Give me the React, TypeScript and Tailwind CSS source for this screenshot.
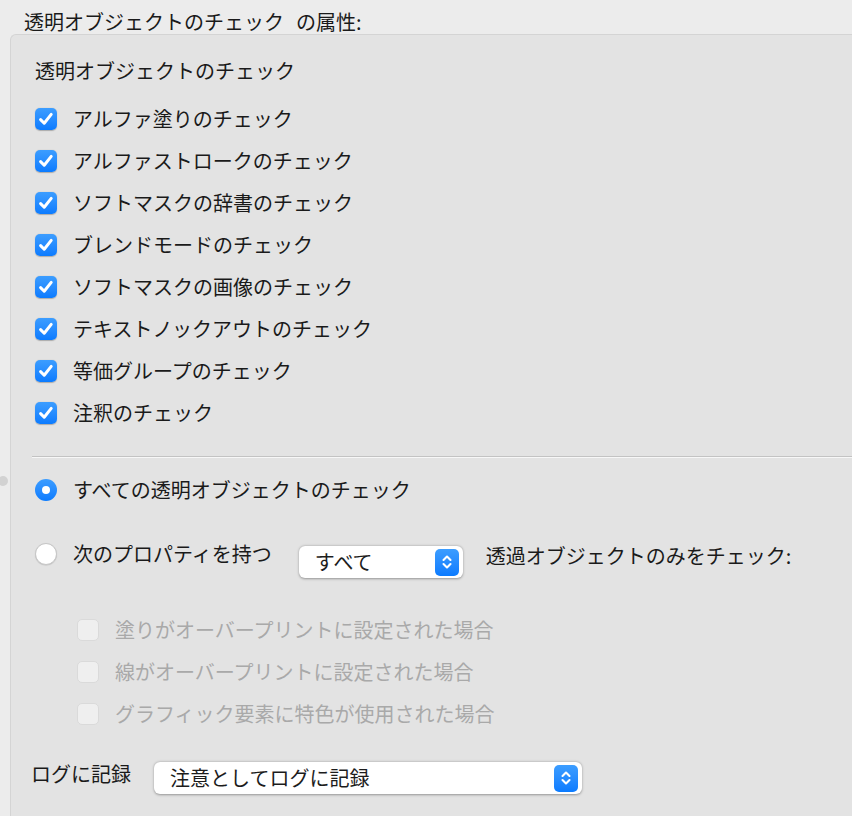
import React from 'react';

const checks = [
  'アルファ塗りのチェック',
  'アルファストロークのチェック',
  'ソフトマスクの辞書のチェック',
  'ブレンドモードのチェック',
  'ソフトマスクの画像のチェック',
  'テキストノックアウトのチェック',
  '等価グループのチェック',
  '注釈のチェック',
];

const disabledChecks = [
  '塗りがオーバープリントに設定された場合',
  '線がオーバープリントに設定された場合',
  'グラフィック要素に特色が使用された場合',
];

const CheckBox = ({ checked }: { checked: boolean }) =>
  checked ? (
    <span className="w-[22px] h-[22px] rounded-[5px] bg-gradient-to-b from-[#3c9dff] to-[#0a7bff] flex items-center justify-center shrink-0 shadow-[0_0.5px_1px_rgba(0,0,0,0.25)]">
      <svg width="18" height="18" viewBox="0 0 18 18" fill="none">
        <path d="M3.6 9.6 L7.2 13.2 L14.2 4.4" stroke="white" strokeWidth="3" strokeLinecap="round" strokeLinejoin="round" />
      </svg>
    </span>
  ) : (
    <span className="w-[22px] h-[22px] rounded-[5px] bg-[#efefef] border border-[#dadada] shrink-0" />
  );

const Stepper = () => (
  <span className="w-[24px] h-[27px] rounded-[5px] bg-gradient-to-b from-[#3c9dff] to-[#0a7bff] flex items-center justify-center shrink-0">
    <svg width="12" height="18" viewBox="0 0 12 18" fill="none">
      <path d="M2.5 7 L6 3.5 L9.5 7" stroke="white" strokeWidth="2.1" strokeLinecap="round" strokeLinejoin="round" />
      <path d="M2.5 11 L6 14.5 L9.5 11" stroke="white" strokeWidth="2.1" strokeLinecap="round" strokeLinejoin="round" />
    </svg>
  </span>
);

const Select = ({ label, width }: { label: string; width: string }) => (
  <div className={`${width} h-[32px] bg-white rounded-[6px] shadow-[0_0.5px_2.5px_rgba(0,0,0,0.35)] flex items-center justify-between pl-[16px] pr-[4px] shrink-0`}>
    <span className="leading-[28px] text-[#1c1c1c]">{label}</span>
    <Stepper />
  </div>
);

export default function App() {
  return (
    <div
      className="relative w-[852px] h-[816px] bg-[#ececec] overflow-hidden flex flex-col text-[20px] text-[#1a1a1a]"
      style={{ fontFamily: '"Noto Sans CJK JP", "Noto Sans", sans-serif' }}
    >
      {/* splitter handle */}
      <span className="absolute left-[-2px] top-[476px] w-[10px] h-[10px] rounded-full bg-[#d2d2d2]" />

      <div className="h-[34px] shrink-0 pl-[24px] pt-[8px]">
        <span className="leading-[28px] flex">
          <span>透明オブジェクトのチェック</span>
          <span className="ml-[12px]">の属性:</span>
        </span>
      </div>

      <div className="flex-1 ml-[10px] mr-[-10px] border-t border-l border-[#d4d4d4] rounded-tl-[6px] bg-[#e3e3e3] pl-[24px] flex flex-col">
        <div className="mt-[22px] leading-[28px]">透明オブジェクトのチェック</div>

        <div className="mt-[13px] flex flex-col">
          {checks.map((c) => (
            <div key={c} className="h-[42px] flex items-center gap-[16px]">
              <CheckBox checked />
              <span className="leading-[28px]">{c}</span>
            </div>
          ))}
        </div>

        <div className="mt-[22px] ml-[-3px] border-t border-[#c3c3c3] border-b border-b-[#f7f7f7]" />

        <div className="mt-[11px] h-[42px] flex items-center gap-[16px]">
          <span className="w-[22px] h-[22px] rounded-full bg-gradient-to-b from-[#3c9dff] to-[#0a7bff] flex items-center justify-center shrink-0">
            <span className="w-[8px] h-[8px] rounded-full bg-white" />
          </span>
          <span className="leading-[28px]">すべての透明オブジェクトのチェック</span>
        </div>

        <div className="mt-[22px] h-[42px] flex items-center">
          <span className="w-[22px] h-[22px] rounded-full bg-white border border-[#c6c6c6] shadow-[0_0.5px_1px_rgba(0,0,0,0.15)] shrink-0" />
          <span className="ml-[16px] leading-[28px]">次のプロパティを持つ</span>
          <div className="ml-[27px] mt-[16px]">
            <Select label="すべて" width="w-[164px]" />
          </div>
          <span className="ml-[23px] mt-[4px] leading-[28px]">透過オブジェクトのみをチェック:</span>
        </div>

        <div className="mt-[34px] ml-[42px] flex flex-col">
          {disabledChecks.map((c) => (
            <div key={c} className="h-[42px] flex items-center gap-[16px]">
              <CheckBox checked={false} />
              <span className="leading-[28px] text-[#a9a9a9]">{c}</span>
            </div>
          ))}
        </div>

        <div className="mt-[27px] ml-[-4px] h-[32px] flex items-center">
          <span className="leading-[28px] mb-[8px]">ログに記録</span>
          <div className="ml-[23px]">
            <Select label="注意としてログに記録" width="w-[428px]" />
          </div>
        </div>
      </div>
    </div>
  );
}
